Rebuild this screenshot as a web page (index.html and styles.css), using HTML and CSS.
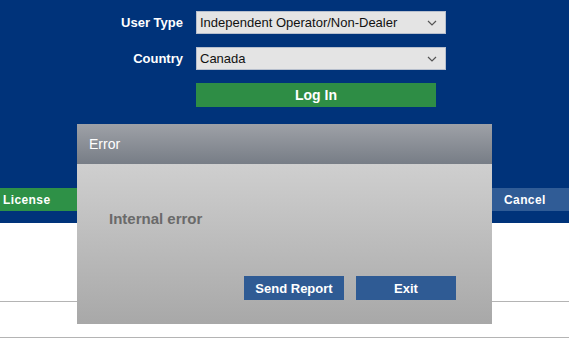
FILE: index.html
```html
<!DOCTYPE html>
<html lang="en">
<head>
  <meta charset="UTF-8">
  <meta name="viewport" content="width=device-width, initial-scale=1.0">
  <title>Log In</title>
  <link rel="stylesheet" href="styles.css">
</head>
<body>
  <div class="page">
    <header class="login">
      <form class="login-form">
        <label for="userType">User Type</label>
        <span class="field">
          <select id="userType">
            <option>Independent Operator/Non-Dealer</option>
          </select>
          <svg class="chevron" width="10" height="6" viewBox="0 0 10 6"><path d="M1 1l4 4 4-4" fill="none" stroke="#555" stroke-width="1.2"/></svg>
        </span>
        <label for="country">Country</label>
        <span class="field">
          <select id="country">
            <option>Canada</option>
          </select>
          <svg class="chevron" width="10" height="6" viewBox="0 0 10 6"><path d="M1 1l4 4 4-4" fill="none" stroke="#555" stroke-width="1.2"/></svg>
        </span>
        <span></span>
        <button type="button" class="btn-login">Log In</button>
      </form>
      <div class="bar">
        <button type="button" class="bar-btn license">License</button>
        <button type="button" class="bar-btn cancel">Cancel</button>
      </div>
    </header>
    <main class="content">
      <hr class="rule first">
      <hr class="rule second">
    </main>
  </div>

  <div class="dialog">
    <div class="dialog-title">Error</div>
    <div class="dialog-body">
      <p class="message">Internal error</p>
      <div class="actions">
        <button type="button" class="dlg-btn">Send Report</button>
        <button type="button" class="dlg-btn">Exit</button>
      </div>
    </div>
  </div>
</body>
</html>
```

FILE: styles.css
```css
body {
  margin: 0;
  font-family: 'Liberation Sans', Arial, sans-serif;
  background: #fff;
}

.login {
  background: #00337a;
  padding: 11px 0 12px;
}

.login-form {
  display: grid;
  grid-template-columns: 183px 250px;
  column-gap: 13px;
  row-gap: 13px;
  align-items: center;
}

.login-form label {
  text-align: right;
  color: #fff;
  font-weight: bold;
  font-size: 13px;
}

.field {
  position: relative;
  display: block;
  height: 23px;
}

select {
  appearance: none;
  -webkit-appearance: none;
  width: 250px;
  height: 23px;
  margin: 0;
  padding: 0 0 0 3px;
  border: 1px solid #b7bfcd;
  background: #e4e4e4;
  font-family: 'Liberation Sans', Arial, sans-serif;
  font-size: 13px;
  color: #111;
}

.chevron {
  position: absolute;
  right: 9px;
  top: 9px;
}

.btn-login {
  width: 240px;
  height: 24px;
  border: 0;
  background: #2e8d45;
  color: #fff;
  font-family: 'Liberation Sans', Arial, sans-serif;
  font-weight: bold;
  font-size: 14px;
  padding: 0;
}

.bar {
  display: flex;
  justify-content: space-between;
  margin-top: 81px;
}

.bar-btn {
  width: 130px;
  height: 23px;
  border: 0;
  color: #fff;
  font-family: 'Liberation Sans', Arial, sans-serif;
  font-weight: bold;
  font-size: 12px;
  letter-spacing: 0.4px;
  text-align: left;
  padding: 0 0 0 3px;
}

.license {
  background: #2e9147;
}

.cancel {
  background: #305c96;
  padding-left: 65px;
}

.content {
  padding-top: 78px;
}

.rule {
  border: 0;
  border-top: 1px solid #b4b4b4;
  margin: 0;
}

.rule.second {
  margin-top: 35px;
}

.dialog {
  position: absolute;
  left: 77px;
  top: 124px;
  width: 415px;
  height: 200px;
  display: flex;
  flex-direction: column;
}

.dialog-title {
  height: 40px;
  line-height: 40px;
  padding-left: 12px;
  color: #fff;
  font-size: 14px;
  background: linear-gradient(#9ea1a7, #777d86);
}

.dialog-body {
  flex: 1;
  background: linear-gradient(#cfcfcf, #a8a8a8);
  padding: 46px 36px 0 32px;
}

.message {
  margin: 0;
  color: #6a6a6a;
  font-weight: bold;
  font-size: 15px;
  line-height: 18px;
}

.actions {
  display: flex;
  justify-content: flex-end;
  gap: 12px;
  margin-top: 48px;
}

.dlg-btn {
  width: 100px;
  height: 24px;
  border: 0;
  padding: 0;
  background: #2f5b94;
  color: #fff;
  font-family: 'Liberation Sans', Arial, sans-serif;
  font-weight: bold;
  font-size: 13px;
}
```
